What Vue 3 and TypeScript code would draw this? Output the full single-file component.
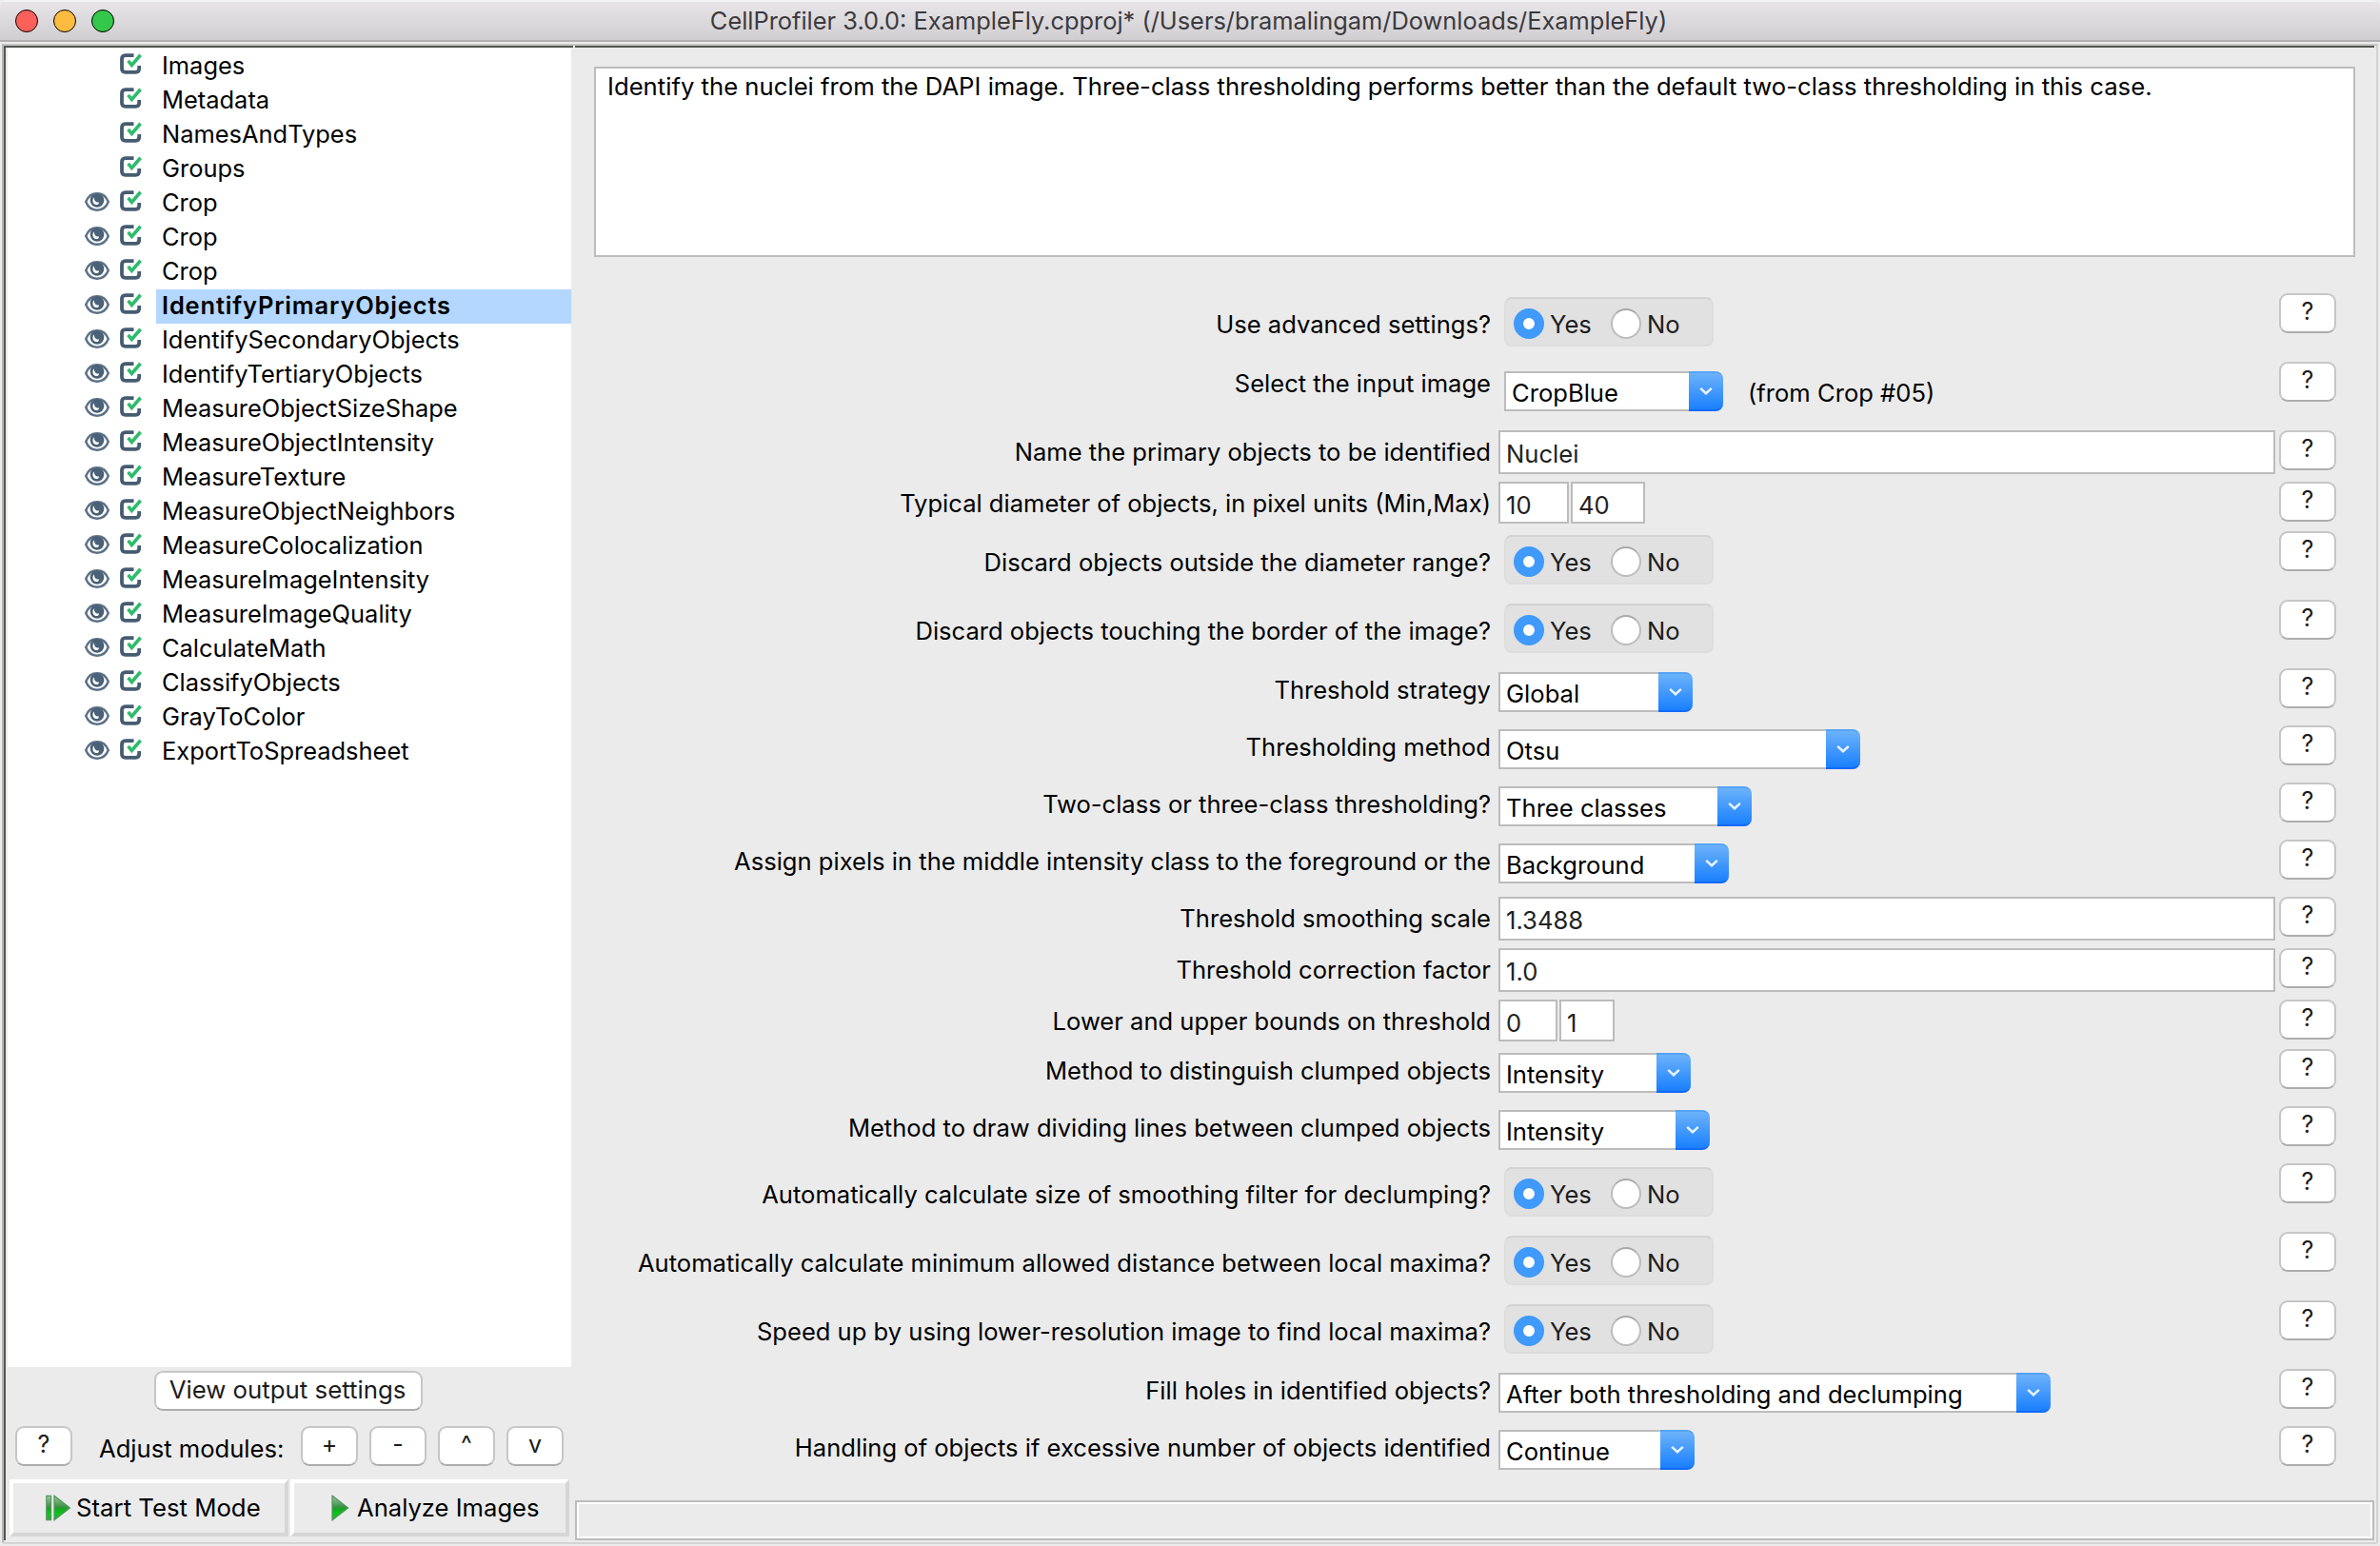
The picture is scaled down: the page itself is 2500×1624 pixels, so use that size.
<script setup lang="ts">
interface Setting {
  label: string
  kind: 'radio' | 'choice' | 'text' | 'pair'
  height: number
  width?: number
  values?: string[]
  widths?: number[]
  note?: string
}

const modules: string[] = [
  'Images', 'Metadata', 'NamesAndTypes', 'Groups', 'Crop', 'Crop', 'Crop',
  'IdentifyPrimaryObjects', 'IdentifySecondaryObjects', 'IdentifyTertiaryObjects',
  'MeasureObjectSizeShape', 'MeasureObjectIntensity', 'MeasureTexture',
  'MeasureObjectNeighbors', 'MeasureColocalization', 'MeasureImageIntensity',
  'MeasureImageQuality', 'CalculateMath', 'ClassifyObjects', 'GrayToColor',
  'ExportToSpreadsheet',
]
const selected = 7
const inputModules = 4

const settings: Setting[] = [
  { label: 'Use advanced settings?', kind: 'radio', height: 72 },
  { label: 'Select the input image', kind: 'choice', height: 72, width: 230, values: ['CropBlue'], note: '(from Crop #05)' },
  { label: 'Name the primary objects to be identified', kind: 'text', height: 54, values: ['Nuclei'] },
  { label: 'Typical diameter of objects, in pixel units (Min,Max)', kind: 'pair', height: 52, values: ['10', '40'], widths: [74, 78] },
  { label: 'Discard objects outside the diameter range?', kind: 'radio', height: 72 },
  { label: 'Discard objects touching the border of the image?', kind: 'radio', height: 72 },
  { label: 'Threshold strategy', kind: 'choice', height: 60, width: 204, values: ['Global'] },
  { label: 'Thresholding method', kind: 'choice', height: 60, width: 380, values: ['Otsu'] },
  { label: 'Two-class or three-class thresholding?', kind: 'choice', height: 60, width: 266, values: ['Three classes'] },
  { label: 'Assign pixels in the middle intensity class to the foreground or the', kind: 'choice', height: 60, width: 242, values: ['Background'] },
  { label: 'Threshold smoothing scale', kind: 'text', height: 54, values: ['1.3488'] },
  { label: 'Threshold correction factor', kind: 'text', height: 54, values: ['1.0'] },
  { label: 'Lower and upper bounds on threshold', kind: 'pair', height: 52, values: ['0', '1'], widths: [62, 58] },
  { label: 'Method to distinguish clumped objects', kind: 'choice', height: 60, width: 202, values: ['Intensity'] },
  { label: 'Method to draw dividing lines between clumped objects', kind: 'choice', height: 60, width: 222, values: ['Intensity'] },
  { label: 'Automatically calculate size of smoothing filter for declumping?', kind: 'radio', height: 72 },
  { label: 'Automatically calculate minimum allowed distance between local maxima?', kind: 'radio', height: 72 },
  { label: 'Speed up by using lower-resolution image to find local maxima?', kind: 'radio', height: 72 },
  { label: 'Fill holes in identified objects?', kind: 'choice', height: 60, width: 580, values: ['After both thresholding and declumping'] },
  { label: 'Handling of objects if excessive number of objects identified', kind: 'choice', height: 60, width: 206, values: ['Continue'] },
]
</script>

<template>
  <div class="window">
    <header class="titlebar">
      <div class="lights"><i class="close"></i><i class="min"></i><i class="max"></i></div>
      <h1>CellProfiler 3.0.0: ExampleFly.cpproj* (/Users/bramalingam/Downloads/ExampleFly)</h1>
    </header>

    <div class="body">
      <aside class="sidebar">
        <ul class="tree">
          <li v-for="(m, i) in modules" :key="i">
            <span class="eye">
              <svg v-if="i >= inputModules" width="28" height="22" viewBox="0 0 28 22">
                <path d="M2.200 11C4.600 4.900 9 2.300 14 2.300S23.400 4.900 25.800 11C23.400 17 19 19.700 14 19.700S4.600 17 2.200 11Z" fill="#fff" stroke="#5b7186" stroke-width="2.400" />
                <circle cx="14" cy="9.500" r="7.300" fill="#4a6177" />
                <path d="M10.600 6.200C8.600 9 9.200 13 12.600 14C14.800 14.500 16.400 13 15.800 11.200C13.600 12.200 11 10.600 10.600 6.200Z" fill="#fff" />
              </svg>
            </span>
            <span class="check">
              <svg width="26" height="24" viewBox="0 0 26 24">
                <path d="M15.500 3.200H6.800Q3 3.200 3 7V17Q3 20.800 6.800 20.800H17.400Q21.200 20.800 21.200 17V14" fill="none" stroke="#465c71" stroke-width="3.800" />
                <path d="M9.600 8.800L13.400 13.400L22.600 2.800" fill="none" stroke="#2fbb6d" stroke-width="3.600" />
              </svg>
            </span>
            <span class="name" :class="{ selected: i === selected }">{{ m }}</span>
          </li>
        </ul>

        <div class="output"><button class="push wide">View output settings</button></div>
        <div class="adjust">
          <button class="push">?</button>
          <span class="adjust-label">Adjust modules:</span>
          <button class="push">+</button>
          <button class="push">-</button>
          <button class="push">^</button>
          <button class="push">v</button>
        </div>
        <div class="run">
          <button class="bevel start">
            <svg width="28" height="28" viewBox="0 0 28 28">
              <defs>
                <linearGradient id="play" x1="0" y1="0" x2="0" y2="1">
                  <stop offset="0" stop-color="#9cc9a2" />
                  <stop offset="0.450" stop-color="#3f9148" />
                  <stop offset="0.550" stop-color="#16a81f" />
                  <stop offset="0.750" stop-color="#08c918" />
                  <stop offset="1" stop-color="#3f9f4a" />
                </linearGradient>
              </defs>
              <rect x="0.800" y="1.300" width="4.800" height="25.400" fill="url(#play)" stroke="#55965d" stroke-width="1.200" />
              <path d="M9 1.300L25.400 14L9 26.700Z" fill="url(#play)" stroke="#4c9455" stroke-width="1.200" />
            </svg>
            <span>Start Test Mode</span>
          </button>
          <button class="bevel analyze">
            <svg width="20" height="28" viewBox="0 0 20 28">
              <path d="M1 1.300L17.600 14L1 26.700Z" fill="url(#play)" stroke="#4c9455" stroke-width="1.200" />
            </svg>
            <span>Analyze Images</span>
          </button>
        </div>
      </aside>

      <main class="main">
        <div class="notes">Identify the nuclei from the DAPI image. Three-class thresholding performs better than the default two-class thresholding in this case.</div>

        <div class="settings">
          <div v-for="s in settings" :key="s.label" class="row" :class="[s.kind, { noted: s.note }]" :style="{ height: s.height + 'px' }">
            <label>{{ s.label }}</label>
            <div class="control">
              <div v-if="s.kind === 'radio'" class="radios">
                <i class="dot on"></i><span class="yes">Yes</span><i class="dot"></i><span>No</span>
              </div>
              <template v-else-if="s.kind === 'choice'">
                <div class="combo" :style="{ width: s.width + 'px' }">
                  <span>{{ s.values![0] }}</span>
                  <b><svg width="16" height="10" viewBox="0 0 16 10"><path d="M2.200 1.800L8 7.200L13.800 1.800" fill="none" stroke="#e9f3ff" stroke-width="2.500" /></svg></b>
                </div>
                <span v-if="s.note" class="note">{{ s.note }}</span>
              </template>
              <div v-else-if="s.kind === 'text'" class="field">{{ s.values![0] }}</div>
              <template v-else>
                <div v-for="(v, k) in s.values" :key="k" class="field small" :style="{ width: s.widths![k] + 'px' }">{{ v }}</div>
              </template>
            </div>
            <button class="push">?</button>
          </div>
        </div>

        <div class="status"></div>
      </main>
    </div>
  </div>
</template>

<style>
body {
  margin: 0;
  background: #ebebeb;
}
</style>

<style scoped>
* {
  box-sizing: border-box;
}
.window {
  width: 2500px;
  height: 1624px;
  overflow: hidden;
  display: flex;
  flex-direction: column;
  background: #ebebeb;
  font-family: Inter, Roboto, sans-serif;
  font-size: 25.600px;
  line-height: 32px;
  color: #000;
  border-radius: 8px 8px 10px 10px;
  white-space: nowrap;
}
.titlebar {
  position: relative;
  flex: none;
  height: 44px;
  border-top: 2px solid #f3f2f5;
  border-bottom: 2px solid #b1afb1;
  background: linear-gradient(#e7e5e8, #d1ced2);
  display: flex;
  align-items: center;
  justify-content: center;
}
.titlebar h1 {
  margin: 0 0 0 -3px;
  font-size: 25.400px;
  font-weight: 400;
  line-height: 36px;
  color: #3c3a3d;
}
.lights {
  position: absolute;
  left: 16px;
  top: 8px;
  display: flex;
  gap: 16px;
}
.lights i {
  width: 24px;
  height: 24px;
  border-radius: 50%;
  border: 1.500px solid;
}
.close { background: #fc605b; border-color: #df4744; }
.min { background: #fdbc40; border-color: #dfa032; }
.max { background: #34c84a; border-color: #27aa35; }

.body {
  flex: none;
  display: flex;
  height: 1576px;
  margin: 2px 2px 0 2px;
  border-top: 2px solid #c5c6c3;
  border-left: 2px solid #b5b5b5;
  border-right: 2px solid #d2d2d2;
  border-bottom: 2px solid #d4d4d4;
  padding-bottom: 2px;
}
.sidebar {
  width: 598px;
  flex: none;
  border-top: 2px solid #555852;
  border-left: 2px solid #555852;
  padding: 1px 2px 0 2px;
  display: flex;
  flex-direction: column;
}
.tree {
  list-style: none;
  margin: 0;
  padding: 1px 0 0;
  width: 592px;
  height: 1385px;
  background: #fff;
  font-size: 25.450px;
}
.tree li {
  height: 36px;
  display: flex;
}
.eye {
  width: 28px;
  margin: 5px 9px 0 80px;
}
.check {
  width: 26px;
  margin: 3px 13px 0 0;
}
.eye svg,
.check svg {
  display: block;
}
.name {
  flex: 1;
  height: 36px;
  line-height: 34px;
  padding-left: 6px;
}
.selected {
  background: #b3d7ff;
  font-weight: 600;
  letter-spacing: 0.850px;
}
button {
  font: inherit;
  color: #000;
  margin: 0;
  padding: 0;
}
.push {
  flex: none;
  width: 60px;
  height: 42px;
  border: 2px solid #c6c6c6;
  border-bottom-color: #adadad;
  border-radius: 9px;
  background: #fff;
  font-size: 25px;
  line-height: 34px;
  text-align: center;
  padding-bottom: 4px;
  color: #1c1c1c;
}
.output {
  padding: 4px 0 0 154px;
  height: 62px;
}
.wide {
  width: 282px;
  font-size: 25.800px;
  padding: 0 2px 2px 0;
}
.adjust {
  display: flex;
  padding-left: 8px;
  height: 56px;
}
.adjust-label {
  width: 212px;
  margin: 8px 0 0 28px;
}
.adjust .push + .push {
  margin-left: 12px;
}
.run {
  display: flex;
  gap: 2px;
  padding-left: 2px;
}
.bevel {
  width: 293px;
  height: 60px;
  border: 4px solid #fff;
  border-right-color: #d6d6d6;
  border-bottom-color: #d6d6d6;
  background: #ebebeb;
  display: flex;
  align-items: center;
}
.start svg {
  margin: 0 4px 0 34px;
}
.start span {
  font-size: 25.750px;
}
.analyze svg {
  margin: 0 7px 0 39px;
}
.main {
  flex: none;
  width: 1890px;
  margin-left: 2px;
  border-top: 2px solid #555852;
  padding-top: 20px;
}
.notes {
  width: 1850px;
  height: 200px;
  margin-left: 20px;
  border: 2px solid #bdbdbd;
  background: #fff;
  padding: 3px 0 0 12px;
  font-size: 25.690px;
}
.settings {
  padding-top: 38px;
  height: 1306px;
}
.row {
  display: flex;
}
.row label {
  width: 962px;
  padding-top: 7px;
  text-align: right;
  font-size: 25.570px;
}
.radio label {
  padding-top: 17px;
}
.control {
  width: 828px;
  padding-left: 8px;
  display: flex;
  align-items: flex-start;
}
.radios {
  width: 220px;
  height: 52px;
  margin: 4px 0 0 6px;
  border: 2px solid #dddddd;
  border-top-color: #d3d3d3;
  border-radius: 8px;
  background: #e1e1e1;
  display: flex;
  align-items: flex-start;
  padding: 10px 0 0 8px;
  color: #1d1d1d;
}
.radios span {
  padding: 1px 0 0 6px;
}
.radios .yes {
  width: 70px;
}
.dot {
  width: 32px;
  height: 32px;
  border-radius: 50%;
  background: #fff;
  border: 2px solid #bcbcbc;
  border-top-color: #a9a9a9;
}
.dot.on {
  border: 10px solid #3f9afb;
}
.combo {
  height: 42px;
  margin-top: 4px;
  display: flex;
}
.noted .combo {
  margin: 10px 0 0 6px;
}
.combo span {
  flex: 1;
  height: 42px;
  line-height: 42px;
  border: 2px solid #bcbcbc;
  border-right: 0;
  background: #fff;
  padding-left: 6px;
}
.combo b {
  width: 36px;
  height: 42px;
  border-radius: 0 8px 8px 0;
  background: linear-gradient(#6cb2fa, #1a80fe);
  border-top: 2px solid #55a3f5;
  border-bottom: 2px solid #1269fb;
  display: flex;
  align-items: center;
  justify-content: center;
}
.note {
  margin: 17px 0 0 26px;
}
.field {
  width: 816px;
  height: 46px;
  border: 2px solid #bcbcbc;
  background: #fff;
  padding-left: 6px;
  line-height: 46px;
  color: #222;
}
.small {
  height: 44px;
  margin-right: 2px;
}
.status {
  width: 1890px;
  height: 42px;
  border: 2px solid #bcbcbc;
  box-shadow: inset 0 0 0 2px #fff;
}
</style>
